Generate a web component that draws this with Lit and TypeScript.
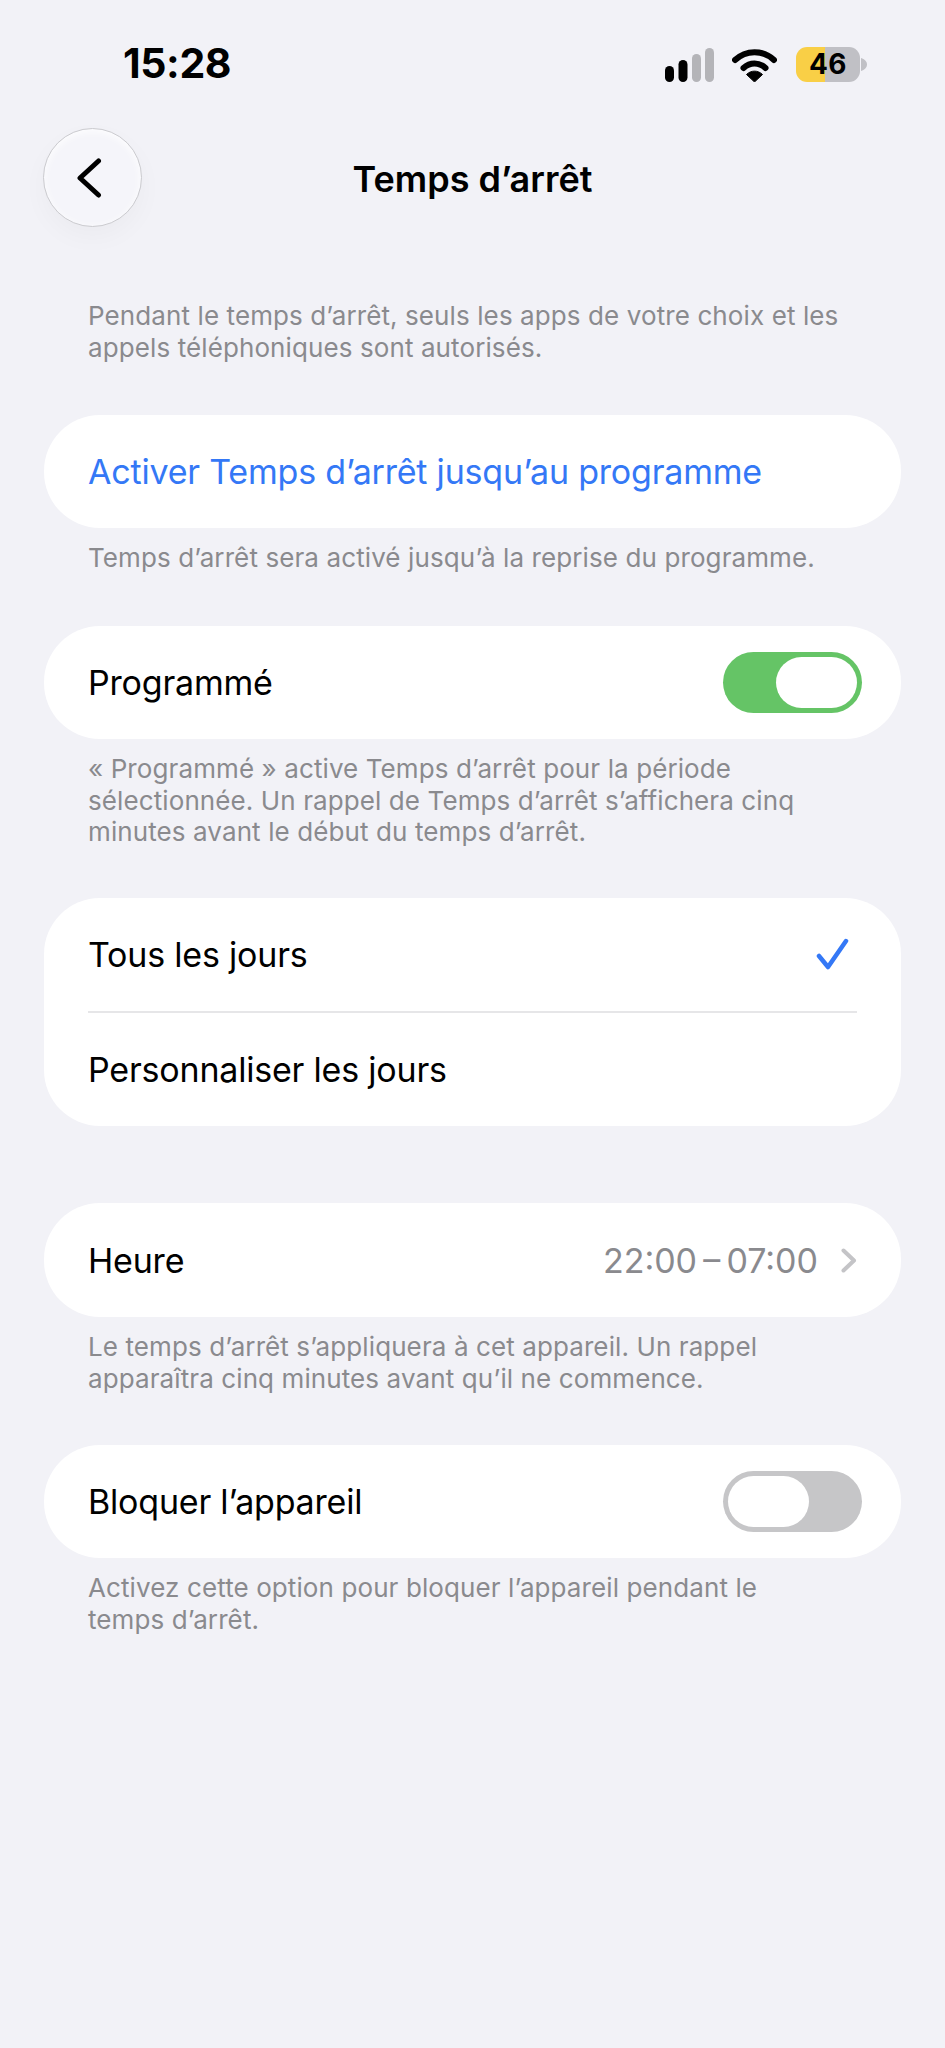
import { LitElement, html, css } from "lit";
import { customElement } from "lit/decorators.js";

@customElement("app-root")
export class AppRoot extends LitElement {
  static styles = css`
    :host { display: block; width: 945px; height: 2048px; background: #f2f2f7; overflow: hidden;
      font-family: Inter, "Liberation Sans", sans-serif; color: #000; }
    * { box-sizing: border-box; }
    .status { height: 128px; padding: 0 78px 0 123px; display: flex; justify-content: space-between; align-items: flex-start; }
    .time { margin-top: 38px; font-size: 41px; line-height: 50px; font-weight: 700; letter-spacing: -0.4px; }
    .icons { display: flex; align-items: flex-start; margin-top: 47px; }
    .signal { margin-top: 1px; margin-right: 18px; display: block; }
    .wifi { margin-right: 19px; display: block; }
    .batt { width: 64px; height: 35px; border-radius: 11px; background: linear-gradient(90deg, #f9cf46 0 29px, #c0c0c5 29px);
      font-size: 28px; line-height: 35px; font-weight: 700; text-align: center; letter-spacing: 0.5px; }
    .nub { margin: 11px 0 0 1px; display: block; }
    .nav { height: 99px; padding-left: 43px; display: grid; grid-template-columns: 99px 1fr 142px; align-items: center; }
    .back { width: 99px; height: 99px; border-radius: 50%; border: 1.5px solid #cbcbcf; background: #f5f5fa;
      box-shadow: 0 10px 26px rgba(0,0,0,.03), inset 0 2px 8px rgba(255,255,255,.9); display: flex; align-items: center; justify-content: center; padding-right: 7px; }
    .title { text-align: center; font-size: 36px; font-weight: 600; line-height: 46px; margin-top: 2px; }
    .content { padding: 73px 44px 0; }
    .foot { margin: 0; padding: 0 44px; font-size: 26px; line-height: 31.5px; color: #8a8a8e; letter-spacing: 0.1px; }
    .card { background: #fff; border-radius: 56px; }
    .row { height: 113px; padding: 0 44px; display: flex; align-items: center; justify-content: space-between; font-size: 34px; letter-spacing: -0.2px; }
    .blue { color: #3478f6; }
    .divider { height: 2px; margin: 0 44px; background: #e6e6e8; }
    .tall { height: 114px; }
    .toggle { width: 139px; height: 61px; border-radius: 31px; padding: 5px; display: flex; margin-right: -5px; }
    .toggle.on { background: #65c466; justify-content: flex-end; }
    .toggle.off { background: #c6c6c8; }
    .thumb { width: 81px; height: 51px; border-radius: 26px; background: #fff; }
    .value { color: #8a8a8e; display: flex; align-items: center; gap: 23px; letter-spacing: 0; }
    .check { margin-right: 8px; display: block; }
    .m1 { margin-top: 52px; } .f1 { margin-top: 14px; } .m2 { margin-top: 52.5px; }
    .m3 { margin-top: 50.5px; } .m4 { margin-top: 77px; } .m5 { margin-top: 51px; }
  `;

  private toggle(on: boolean) {
    return html`<div class="toggle ${on ? "on" : "off"}"><div class="thumb"></div></div>`;
  }

  render() {
    return html`
      <div class="status">
        <div class="time">15:28</div>
        <div class="icons">
          <svg class="signal" width="49" height="34" viewBox="0 0 49 34">
            <rect x="0" y="18" width="9" height="16" rx="4.5" fill="#000"/>
            <rect x="13.5" y="12" width="9" height="22" rx="4.5" fill="#000"/>
            <rect x="27" y="6" width="9" height="28" rx="4.5" fill="#b4b4b8"/>
            <rect x="40" y="0" width="9" height="34" rx="4.5" fill="#b4b4b8"/>
          </svg>
          <svg class="wifi" width="45" height="35" viewBox="0 0 45 35">
            <path d="M3 13 C14 2.5 31 2.5 42 13" fill="none" stroke="#000" stroke-width="6" stroke-linecap="round"/>
            <path d="M11.5 21 C18 15 27 15 33.5 21" fill="none" stroke="#000" stroke-width="6" stroke-linecap="round"/>
            <path d="M22.5 35 L14.5 27.5 C19 23 26 23 30.5 27.5 Z" fill="#000" stroke="#000" stroke-width="1" stroke-linejoin="round"/>
          </svg>
          <div class="batt">46</div>
          <svg class="nub" width="6" height="13" viewBox="0 0 6 13"><path d="M0 0 C3.5 1 6 3.5 6 6.5 C6 9.5 3.5 12 0 13 Z" fill="#c0c0c5"/></svg>
        </div>
      </div>
      <div class="nav">
        <div class="back">
          <svg width="26" height="40" viewBox="0 0 26 40"><path d="M22.5 3 L4 20 L22.5 37" fill="none" stroke="#000" stroke-width="5" stroke-linecap="round" stroke-linejoin="round"/></svg>
        </div>
        <div class="title">Temps d’arrêt</div>
        <div></div>
      </div>
      <div class="content">
        <p class="foot">Pendant le temps d’arrêt, seuls les apps de votre choix et les appels téléphoniques sont autorisés.</p>
        <div class="card m1"><div class="row blue">Activer Temps d’arrêt jusqu’au programme</div></div>
        <p class="foot f1">Temps d’arrêt sera activé jusqu’à la reprise du programme.</p>
        <div class="card m2"><div class="row">Programmé ${this.toggle(true)}</div></div>
        <p class="foot f1">« Programmé » active Temps d’arrêt pour la période sélectionnée. Un rappel de Temps d’arrêt s’affichera cinq minutes avant le début du temps d’arrêt.</p>
        <div class="card m3">
          <div class="row">Tous les jours
            <svg class="check" width="33" height="33" viewBox="0 0 33 33"><path d="M3 18 L12 29 L30 3" fill="none" stroke="#3478f6" stroke-width="4.5" stroke-linecap="round" stroke-linejoin="round"/></svg>
          </div>
          <div class="divider"></div>
          <div class="row">Personnaliser les jours</div>
        </div>
        <div class="card m4"><div class="row tall">Heure
          <div class="value">22:00\u2009–\u200907:00
            <svg width="16" height="25" viewBox="0 0 16 25"><path d="M2.5 2.5 L13 12.5 L2.5 22.5" fill="none" stroke="#c4c4c7" stroke-width="4" stroke-linecap="round" stroke-linejoin="round"/></svg>
          </div>
        </div></div>
        <p class="foot f1">Le temps d’arrêt s’appliquera à cet appareil. Un rappel apparaîtra cinq minutes avant qu’il ne commence.</p>
        <div class="card m5"><div class="row">Bloquer l’appareil ${this.toggle(false)}</div></div>
        <p class="foot f1">Activez cette option pour bloquer l’appareil pendant le<br />temps d’arrêt.</p>
      </div>
    `;
  }
}
